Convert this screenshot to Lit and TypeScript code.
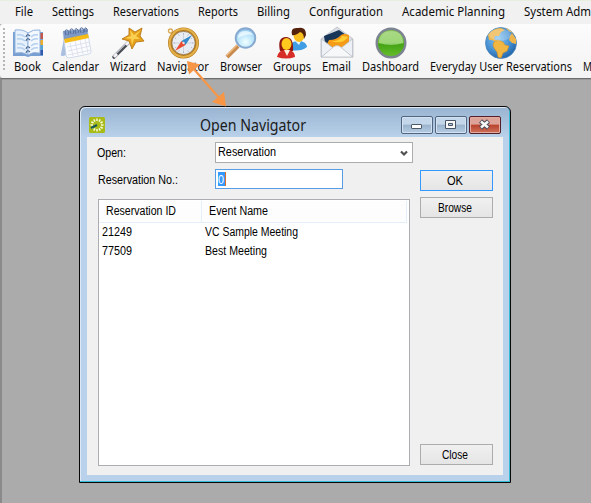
import { LitElement, html, css, svg } from "lit";
import { customElement, property } from "lit/decorators.js";

/** One line of text, condensed to a known width. */
@customElement("fit-label")
class FitLabel extends LitElement {
  @property() text = "";
  @property({ type: Number }) w = 10;
  static styles = css`
    :host { display: block; flex: none; line-height: 0; }
    svg { display: block; overflow: visible; height: 16px; }
    text { fill: currentColor; }
  `;
  render() {
    return html`<svg width=${this.w} height="16"><text x="0" y="12" textLength=${this.w} lengthAdjust="spacingAndGlyphs">${this.text}</text></svg>`;
  }
}

const spokes = (n: number, r1: number, r2: number, cx: number, cy: number) =>
  Array.from({ length: n }, (_, i) => {
    const a = (i * 2 * Math.PI) / n;
    return `M${cx + r1 * Math.cos(a)} ${cy + r1 * Math.sin(a)}L${cx + r2 * Math.cos(a)} ${cy + r2 * Math.sin(a)}`;
  }).join("");

const icons: Record<string, unknown> = {
  book: svg`
    <path d="M1 5H4V26H28V5H31V29H19L16 30L13 29H1Z" fill="#789fd2"/>
    <path d="M3 3Q11 2 16 6V28Q10 24 3 26Z" fill="#e6f1fc" stroke="#91b1dc"/>
    <path d="M16 6Q21 2 28 3V26Q21 24 16 28Z" fill="#f3f8fe" stroke="#91b1dc"/>
    <path d="M5 8Q10 7 13 10M5 12Q10 11 13 14M5 17Q10 16 13 19M5 21Q10 20 13 23M19 10Q22 7 26 8M19 14Q22 11 26 12M19 19Q22 16 26 17M19 23Q22 20 26 21" fill="none" stroke="#b5cfef" stroke-width="1.4"/>
    <path d="M14 10Q15 6 18 9M14 14Q15 10 18 13M14 22Q15 18 18 21M14 26Q15 22 18 25" fill="none" stroke="#47658e" stroke-width="1.1"/>
    <path d="M28.500 6h2.500v6h-2.500z" fill="#c45a4d"/><path d="M28.500 13h2.500v5h-2.500z" fill="#efad2c"/><path d="M28.500 18h2.500v5h-2.500z" fill="#56a3d8"/><path d="M28.500 23h2.500v5h-2.500z" fill="#3158ad"/>`,
  calendar: svg`
    <path d="M4 11L1 27Q0 29 3 29L10 27Z" fill="#a9bfdf"/>
    <path d="M3 5L27 2L31 24Q32 26 29 27L9 31Q6 31 6 28Z" fill="#fbfcff" stroke="#c7d1e3" stroke-width=".8"/>
    <path d="M3 4L27 2L28 8L4 13Z" fill="#7d99c6"/><path d="M4 12L28 7L29 11L5 16Z" fill="#f5bb17"/>
    <path d="M7 20L30 15M8 24L30 19M8 28L31 23M10 16L13 29M15 14L18 28M20 13L23 27M25 12L28 26" stroke="#d8dce8" stroke-width=".8" fill="none"/>
    <path d="M6 8Q4 2 7 3T8 8M11 7Q9 1 12 2T13 7M16 7Q14 0 17 2T18 6M21 6Q19 0 22 1T23 6M25 5Q24 0 26 1T27 5" fill="none" stroke="#526b9b" stroke-width="1"/>`,
  wizard: svg`
    <path d="M2 30L17 15" stroke="#4b4d55" stroke-width="3.600" stroke-linecap="round"/>
    <path d="M2 28.500L16 14.500" stroke="#c5c7cd" stroke-width="1.200"/><path d="M2 30L5 27M14 18L18 14" stroke="#f3f3f6" stroke-width="3"/>
    <path d="M17 1L23 5L30 1L28 9L32 14L24 15L20 22L17 14L10 12L17 8Z" fill="#e6a11c" stroke="#b87716" stroke-width=".9"/>
    <path d="M18 3L22 8L29 3L24 9L28 12L22 12L20 18L19 12L13 11L19 9Z" fill="#fbd052"/>`,
  navigator: svg`
    <circle cx="3.500" cy="4" r="2" fill="none" stroke="#dba957" stroke-width="1.400"/>
    <circle cx="16.500" cy="16" r="13.600" fill="#e9edf3" stroke="#b67d20" stroke-width="3.800"/>
    <circle cx="16.500" cy="16" r="13.900" fill="none" stroke="#e5b14a" stroke-width="2"/>
    <circle cx="16.500" cy="16" r="11.600" fill="none" stroke="#785322" stroke-width=".6"/>
    <path d="M16.500 6V26M6.500 16H26.500" stroke="#c5ccd7" stroke-width=".8"/><path d="${spokes(12, 8.500, 10, 16.500, 16)}" stroke="#a3adbc" stroke-width=".8"/>
    <path d="M25 8L14.500 14L18.500 18Z" fill="#3489cd"/><path d="M8 24L14.500 14L18.500 18Z" fill="#e84a32"/><circle cx="16.500" cy="16" r="1.200" fill="#f6dad2"/>`,
  browser: svg`
    <path d="M2 30L13 19" stroke="#c98b4d" stroke-width="4"/><path d="M1.500 28.500L12 18" stroke="#edbd83" stroke-width="1.500"/>
    <circle cx="20.500" cy="11" r="9.800" fill="url(#lens)" stroke="#87a9cf" stroke-width="1.900"/>
    <path d="M13 11Q13 4 20 4Q26 4 28 8Q22 6 13 11" fill="#f4fcff" opacity=".75"/>`,
  groups: svg`
    <path d="M14 22Q14 15 20 14L25 14Q31 16 31 20Q25 25 14 23Z" fill="#419ee5"/><path d="M19 14L23 18L25 14" fill="#e7f5ff"/>
    <ellipse cx="23" cy="8.500" rx="5.500" ry="6.500" fill="#f9bf20"/><path d="M16 8Q14 0 22 1Q30-1 30 8L28 12Q28 6 24 5Q19 9 16 8Z" fill="#54210d"/>
    <path d="M4 24Q1 10 10 10Q18 10 17 24Z" fill="#8d170e"/><ellipse cx="10.500" cy="17" rx="5" ry="6" fill="#ffc91e"/>
    <path d="M1 30Q2 24 8 23L11 26L14 23Q19 25 19 30Q10 33 1 30Z" fill="#d62e26"/><path d="M8 23L11 29L14 23Z" fill="#fff0dd"/>`,
  email: svg`
    <path d="M0 12L16 0L32 12V30H0Z" fill="#d9dde3" stroke="#b9bec5" stroke-width=".8"/>
    <path d="M3 9L18 3L28 10V17L16 23L4 16Z" fill="#183657"/>
    <path d="M8 13Q16 13 20 8Q23 6 28 8V18L16 23L6 17Z" fill="#f59b16"/><path d="M9 14Q19 15 21 9Q24 9 27 10Q22 18 9 14" fill="#ffcf33"/>
    <path d="M.500 12L12 21L.500 30ZM31.500 12L20 21L31.500 30Z" fill="#edf0f4" stroke="#b7bcc4" stroke-width=".7"/>
    <path d="M.500 30L13 19.500Q16 17.500 19 19.500L31.500 30Z" fill="#f6f7f9" stroke="#b7bcc4" stroke-width=".7"/>`,
  dashboard: svg`
    <circle cx="16" cy="16" r="14.300" fill="url(#green)" stroke="#7d8491" stroke-width="2.400"/>
    <path d="M4 16Q4 4 16 4Q28 4 28 16Q16 20 4 16" fill="#d4f4b8" opacity=".5"/>`,
  globe: svg`
    <circle cx="16" cy="16" r="15.500" fill="url(#sea)" stroke="#5288b9" stroke-width=".8"/>
    <path d="M3 8Q8 1 16 1L20 3L16 5L14 9L10 9L9 12L13 14L11 15L7 13L4 13Z" fill="#edb54b"/>
    <path d="M9 15L13 13L18 15L20 18L24 19L22 24L18 26L16 31L13 30L12 25L9 21L8 18Z" fill="#f2b742" stroke="#d99122" stroke-width=".6"/>
    <path d="M27 6L31 12V17L27 16L24 13L25 9Z" fill="#edb54b"/><path d="M20 1Q25 2 28 6L25 5Z" fill="#dfc078"/>
    <ellipse cx="15" cy="8" rx="11" ry="6" fill="#fff" opacity=".23"/>`,
};

const defs = svg`<defs>
  <radialGradient id="lens" cx=".5" cy=".7" r=".7"><stop stop-color="#f0ffff"/><stop offset=".6" stop-color="#b7e3fb"/><stop offset="1" stop-color="#86bde9"/></radialGradient>
  <linearGradient id="green" x2="0" y2="1"><stop stop-color="#83bd58"/><stop offset=".48" stop-color="#6abb38"/><stop offset=".55" stop-color="#45a515"/><stop offset="1" stop-color="#67be2d"/></linearGradient>
  <radialGradient id="sea" cx=".4" cy=".35" r=".7"><stop stop-color="#8ac6f2"/><stop offset=".6" stop-color="#4590d2"/><stop offset="1" stop-color="#1f61a6"/></radialGradient>
</defs>`;

const menus: [string, number][] = [["File", 18], ["Settings", 42], ["Reservations", 66], ["Reports", 40], ["Billing", 33], ["Configuration", 74], ["Academic Planning", 103], ["System Adm", 67]];
const tools: [string, number, string][] = [["Book", 27, "book"], ["Calendar", 47, "calendar"], ["Wizard", 36, "wizard"], ["Navigator", 52, "navigator"], ["Browser", 42, "browser"], ["Groups", 38, "groups"], ["Email", 29, "email"], ["Dashboard", 57, "dashboard"], ["Everyday User Reservations", 142, "globe"]];

@customElement("app-root")
class AppRoot extends LitElement {
  static styles = css`
    :host { display: block; width: 591px; height: 503px; overflow: hidden; position: relative; background: #ababab; color: #0c0c0c; font: 12px "Noto Sans", "Open Sans", sans-serif; }
    * { box-sizing: border-box; }
    svg { display: block; overflow: visible; }
    .menu { height: 24px; background: #f1f1f1; border-top: 1px solid #e7f0df; display: flex; gap: 19px; padding: 3px 0 0 15px; overflow: hidden; }
    .tools { height: 54px; background: linear-gradient(#fcfcfc, #f3f3f3); display: flex; padding: 3px 0 0 4px; border-radius: 3px 0 0 3px; overflow: hidden; }
    .grip { width: 2px; height: 43px; margin: 1px 8px 0 -1px; flex: none; background: repeating-linear-gradient(#b6b6b6 0 2px, transparent 2px 4px); }
    .items { display: flex; gap: 11px; margin-left: 1px; }
    .tool { flex: none; display: grid; justify-items: center; grid-template-rows: 32px 16px; }
    .icon { margin: 0 -3px; }
    .desk { height: 425px; border-top: 1px solid #6d6d6d; border-left: 2px solid #8a8a8a; box-shadow: inset 0 1px #999; }
    .window { position: absolute; left: 79px; top: 106px; width: 432px; height: 377px; padding: 0 7px 7px; display: flex; flex-direction: column; background: linear-gradient(#99b4d1, #b9d1ea 30px); border: 1px solid #080808; border-radius: 6px 6px 0 0; box-shadow: inset -1px -1px #35bdd6, inset 1px 1px #dce9f5; }
    .title { height: 30px; flex: none; display: flex; align-items: flex-start; }
    .logo { margin: 10px 0 0 2px; width: 16px; }
    .name { font-size: 16px; margin: 12px 95px 0; color: #1b1b1b; }
    .wbtn { width: 32px; height: 18px; flex: none; margin: 9px 2px 0 0; border: 1px solid #51657e; border-radius: 2px; background: linear-gradient(#c4d6e9 45%, #9ab3cc 50%, #b5cce3); box-shadow: inset 0 0 0 1px #d2e2f2; }
    .wbtn.red { background: linear-gradient(#dda298 45%, #b9432c 50%, #ce725c); border-color: #53202a; box-shadow: inset 0 0 0 1px #e4aaa0; margin-right: 0; }
    .body { flex: 1; background: #f0f0f0; display: grid; grid-template-columns: 312px 73px; column-gap: 10px; padding: 5px 0 0 11px; color: #000; font: 12px "Liberation Sans", Arial, sans-serif; }
    .main { display: flex; flex-direction: column; }
    .row { display: flex; align-items: flex-start; }
    .cap { width: 117px; flex: none; }
    .cap.one { padding: 3px 0 0; margin-left: -1px; width: 118px; }
    .cap.two { padding-top: 3px; }
    .select { width: 198px; height: 21px; flex: none; border: 1px solid #acacac; background: #fff; padding: 1px 4px 0 2px; display: flex; justify-content: space-between; }
    .input { width: 128px; height: 20px; border: 1px solid #569de5; background: #fff; padding: 3px 0 0 2px; }
    .sel { width: 8px; height: 14px; background: #3399ff; color: #fff; border-right: 1px solid #d86f2c; margin-top: -1px; }
    .sel fit-label { margin-top: -1px; }
    .gap { height: 6px; }
    .list { width: 312px; height: 267px; background: #fff; border: 1px solid #acacb1; margin-top: 10px; padding: 1px 2px 0 0; }
    .head { height: 22px; border-bottom: 1px solid #e3effb; border-right: 1px solid #e3effb; display: grid; grid-template-columns: 103px 1fr; background: #fdfdfd; }
    .head div { padding: 2px 0 0 7px; border-right: 1px solid #e3effb; }
    .head div:last-child { border: 0; }
    .line { height: 19px; display: grid; grid-template-columns: 103px 1fr; padding: 1px 0 0 3px; }
    .buttons { padding-top: 28px; display: flex; flex-direction: column; gap: 6px; }
    .btn { width: 73px; height: 21px; flex: none; border: 1px solid #acacac; background: linear-gradient(#f0f0f0, #e5e5e5); display: flex; justify-content: center; padding: 2px 3px 0 0; }
    .btn.ok { border-color: #3399ff; }
    .btn.close { margin: auto 0 10px; }
    .arrow { position: absolute; left: 180px; top: 56px; }
  `;
  render() {
    return html`
      <div class="menu">${menus.map(([t, w]) => html`<fit-label text=${t} w=${w}></fit-label>`)}</div>
      <div class="tools"><div class="grip"></div><div class="items">
        ${tools.map(([t, w, i]) => html`<div class="tool"><svg class="icon" width="32" height="32" viewBox="0 0 32 32">${defs}${icons[i]}</svg><fit-label text=${t} w=${w}></fit-label></div>`)}
        <div class="tool"><span></span><fit-label text="M" w="9"></fit-label></div>
      </div></div>
      <div class="desk"></div>
      <div class="window">
        <div class="title">
          <svg class="logo" width="16" height="16" viewBox="0 0 16 16"><rect width="16" height="16" rx="1.500" fill="#a9bb16"/><path d=${spokes(12, 4, 6.5, 8, 8)} stroke="#f7fbdc" stroke-width="1.500"/><path d="M2 11L8 8" stroke="#18585d" stroke-width="2"/></svg>
          <fit-label class="name" text="Open Navigator" w="106"></fit-label>
          <div class="wbtn"><svg width="30" height="16"><rect x="9.500" y="7.500" width="10" height="4" rx=".5" fill="#fff" stroke="#505968"/></svg></div>
          <div class="wbtn"><svg width="30" height="16"><path d="M9.500 3.500H19.500V11.500H9.500ZM12.500 6.500V8.500H16.500V6.500Z" fill="#f8f8f8" fill-rule="evenodd" stroke="#485365"/></svg></div>
          <div class="wbtn red"><svg width="30" height="16"><path d="M10.500 4L18.500 11M18.500 4L10.500 11" stroke="#4d4a5a" stroke-width="4.500"/><path d="M11 4.500L18 10.500M18 4.500L11 10.500" stroke="#f8f8f8" stroke-width="2.500"/></svg></div>
        </div>
        <div class="body">
          <div class="main">
            <div class="row"><div class="cap one"><fit-label text="Open:" w="29"></fit-label></div>
              <div class="select"><fit-label text="Reservation" w="58"></fit-label><svg width="8" height="19"><path d="M1 7.500L4 10.500L7 7.500" fill="none" stroke="#505050" stroke-width="2.200"/></svg></div></div>
            <div class="gap"></div>
            <div class="row"><div class="cap two"><fit-label text="Reservation No.:" w="80"></fit-label></div>
              <div class="input"><div class="sel"><fit-label text="0" w="6"></fit-label></div></div></div>
            <div class="list">
              <div class="head"><div><fit-label text="Reservation ID" w="70"></fit-label></div><div><fit-label text="Event Name" w="59"></fit-label></div></div>
              <div class="line"><fit-label text="21249" w="30"></fit-label><fit-label text="VC Sample Meeting" w="93"></fit-label></div>
              <div class="line"><fit-label text="77509" w="30"></fit-label><fit-label text="Best Meeting" w="62"></fit-label></div>
            </div>
          </div>
          <div class="buttons">
            <div class="btn ok"><fit-label text="OK" w="16"></fit-label></div>
            <div class="btn"><fit-label text="Browse" w="34"></fit-label></div>
            <div class="btn close"><fit-label text="Close" w="26"></fit-label></div>
          </div>
        </div>
      </div>
      <svg class="arrow" width="50" height="54"><path d="M12 11L41 44" stroke="#f79646" stroke-width="2.200"/><path d="M7 5L20 8.500L9 18.500ZM46 50.500L44 36L32 46Z" fill="#f79646"/></svg>
    `;
  }
}
